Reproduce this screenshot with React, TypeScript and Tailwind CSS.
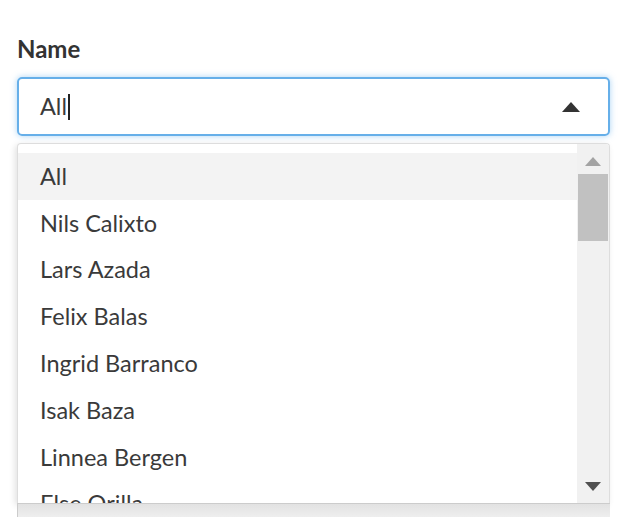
import React from "react";

const names = [
  "All",
  "Nils Calixto",
  "Lars Azada",
  "Felix Balas",
  "Ingrid Barranco",
  "Isak Baza",
  "Linnea Bergen",
  "Else Orilla",
];

export default function App() {
  return (
    <div
      className="relative w-[623px] h-[517px] bg-white overflow-hidden text-[#333]"
      style={{ fontFamily: "Lato, 'Open Sans', sans-serif" }}
    >
      <div className="pt-[35px] px-[17px] pr-[13px]">
        <div className="text-[24px] font-bold leading-[28px] text-[#333]">Name</div>
        <div className="mt-[14px] h-[59px] rounded-[5px] border-2 border-[#66afe9] shadow-[0_0_6px_rgba(102,175,233,0.55)] flex items-center pl-[21px] pr-[28px]">
          <span className="text-[23.5px] text-[#3a3a3a] leading-none">All</span>
          <span className="ml-[1px] w-[2px] h-[26px] bg-[#222]" />
          <div className="flex-1" />
          <svg width="18" height="10" viewBox="0 0 18 10">
            <path d="M0 10 L9 0 L18 10 Z" fill="#333" />
          </svg>
        </div>
        <div className="h-[7px]" />
        <div className="h-[360px] rounded-t-[4px] border border-[#ddd] border-b-0 bg-white shadow-[-2px_2px_6px_rgba(0,0,0,0.12)] flex overflow-hidden">
          <div className="flex-1 pt-[9px] overflow-hidden">
            {names.map((n, i) => (
              <div
                key={n}
                className={`h-[46.8px] flex items-center pl-[22px] text-[23.5px] text-[#3a3a3a] ${i === 0 ? "bg-[#f3f3f3]" : ""}`}
              >
                {n}
              </div>
            ))}
          </div>
          <div className="w-[32px] bg-[#f1f1f1] flex flex-col items-center">
            <svg className="mt-[13px]" width="16" height="9" viewBox="0 0 16 9">
              <path d="M0 9 L8 0 L16 9 Z" fill="#a3a3a3" />
            </svg>
            <div className="mt-[8px] w-[30px] h-[67px] bg-[#c1c1c1]" />
            <div className="flex-1" />
            <svg className="mb-[12px]" width="16" height="9" viewBox="0 0 16 9">
              <path d="M0 0 L16 0 L8 9 Z" fill="#505050" />
            </svg>
          </div>
        </div>
        <div className="h-[20px] border-l border-t border-[#ccc] bg-gradient-to-b from-[#e2e2e2] to-[#f4f4f4]" />
      </div>
    </div>
  );
}
